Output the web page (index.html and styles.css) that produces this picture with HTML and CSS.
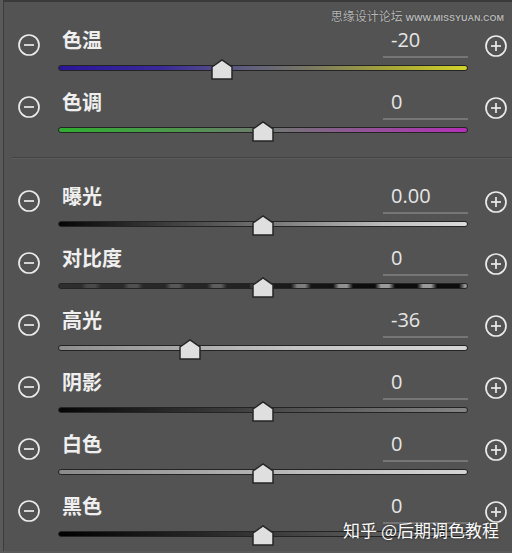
FILE: index.html
```html
<!DOCTYPE html>
<html lang="zh-CN">
  <head>
    <meta charset="UTF-8" />
    <meta name="viewport" content="width=device-width, initial-scale=1.0" />
    <title>基本调整</title>

    <link rel="stylesheet" href="styles.css">
  </head>

  <body>
    <div class="panel">
      <!-- white balance -->
      <div class="row">
        <svg class="btn minus" viewBox="0 0 22 22"><circle cx="11" cy="11" r="10" /><line x1="6" y1="11" x2="16" y2="11" /></svg>
        <div class="control">
          <div class="head">
            <span class="label">色温</span>
            <span class="value">-20</span>
          </div>
          <div class="track temp">
            <svg class="thumb" style="left: 40%" viewBox="0 0 22 21"><polygon points="1,8 11,1 21,8 21,20 1,20" /></svg>
          </div>
        </div>
        <svg class="btn plus" viewBox="0 0 22 22"><circle cx="11" cy="11" r="10" /><line x1="6" y1="11" x2="16" y2="11" /><line x1="11" y1="6" x2="11" y2="16" /></svg>
      </div>

      <div class="row">
        <svg class="btn minus" viewBox="0 0 22 22"><circle cx="11" cy="11" r="10" /><line x1="6" y1="11" x2="16" y2="11" /></svg>
        <div class="control">
          <div class="head">
            <span class="label">色调</span>
            <span class="value">0</span>
          </div>
          <div class="track tint">
            <svg class="thumb" style="left: 50%" viewBox="0 0 22 21"><polygon points="1,8 11,1 21,8 21,20 1,20" /></svg>
          </div>
        </div>
        <svg class="btn plus" viewBox="0 0 22 22"><circle cx="11" cy="11" r="10" /><line x1="6" y1="11" x2="16" y2="11" /><line x1="11" y1="6" x2="11" y2="16" /></svg>
      </div>

      <div class="divider"></div>

      <!-- tone -->
      <div class="row">
        <svg class="btn minus" viewBox="0 0 22 22"><circle cx="11" cy="11" r="10" /><line x1="6" y1="11" x2="16" y2="11" /></svg>
        <div class="control">
          <div class="head">
            <span class="label">曝光</span>
            <span class="value">0.00</span>
          </div>
          <div class="track exposure">
            <svg class="thumb" style="left: 50%" viewBox="0 0 22 21"><polygon points="1,8 11,1 21,8 21,20 1,20" /></svg>
          </div>
        </div>
        <svg class="btn plus" viewBox="0 0 22 22"><circle cx="11" cy="11" r="10" /><line x1="6" y1="11" x2="16" y2="11" /><line x1="11" y1="6" x2="11" y2="16" /></svg>
      </div>

      <div class="row">
        <svg class="btn minus" viewBox="0 0 22 22"><circle cx="11" cy="11" r="10" /><line x1="6" y1="11" x2="16" y2="11" /></svg>
        <div class="control">
          <div class="head">
            <span class="label">对比度</span>
            <span class="value">0</span>
          </div>
          <div class="track contrast">
            <svg class="thumb" style="left: 50%" viewBox="0 0 22 21"><polygon points="1,8 11,1 21,8 21,20 1,20" /></svg>
          </div>
        </div>
        <svg class="btn plus" viewBox="0 0 22 22"><circle cx="11" cy="11" r="10" /><line x1="6" y1="11" x2="16" y2="11" /><line x1="11" y1="6" x2="11" y2="16" /></svg>
      </div>

      <div class="row">
        <svg class="btn minus" viewBox="0 0 22 22"><circle cx="11" cy="11" r="10" /><line x1="6" y1="11" x2="16" y2="11" /></svg>
        <div class="control">
          <div class="head">
            <span class="label">高光</span>
            <span class="value">-36</span>
          </div>
          <div class="track highlights">
            <svg class="thumb" style="left: 32%" viewBox="0 0 22 21"><polygon points="1,8 11,1 21,8 21,20 1,20" /></svg>
          </div>
        </div>
        <svg class="btn plus" viewBox="0 0 22 22"><circle cx="11" cy="11" r="10" /><line x1="6" y1="11" x2="16" y2="11" /><line x1="11" y1="6" x2="11" y2="16" /></svg>
      </div>

      <div class="row">
        <svg class="btn minus" viewBox="0 0 22 22"><circle cx="11" cy="11" r="10" /><line x1="6" y1="11" x2="16" y2="11" /></svg>
        <div class="control">
          <div class="head">
            <span class="label">阴影</span>
            <span class="value">0</span>
          </div>
          <div class="track shadows">
            <svg class="thumb" style="left: 50%" viewBox="0 0 22 21"><polygon points="1,8 11,1 21,8 21,20 1,20" /></svg>
          </div>
        </div>
        <svg class="btn plus" viewBox="0 0 22 22"><circle cx="11" cy="11" r="10" /><line x1="6" y1="11" x2="16" y2="11" /><line x1="11" y1="6" x2="11" y2="16" /></svg>
      </div>

      <div class="row">
        <svg class="btn minus" viewBox="0 0 22 22"><circle cx="11" cy="11" r="10" /><line x1="6" y1="11" x2="16" y2="11" /></svg>
        <div class="control">
          <div class="head">
            <span class="label">白色</span>
            <span class="value">0</span>
          </div>
          <div class="track whites">
            <svg class="thumb" style="left: 50%" viewBox="0 0 22 21"><polygon points="1,8 11,1 21,8 21,20 1,20" /></svg>
          </div>
        </div>
        <svg class="btn plus" viewBox="0 0 22 22"><circle cx="11" cy="11" r="10" /><line x1="6" y1="11" x2="16" y2="11" /><line x1="11" y1="6" x2="11" y2="16" /></svg>
      </div>

      <div class="row">
        <svg class="btn minus" viewBox="0 0 22 22"><circle cx="11" cy="11" r="10" /><line x1="6" y1="11" x2="16" y2="11" /></svg>
        <div class="control">
          <div class="head">
            <span class="label">黑色</span>
            <span class="value">0</span>
          </div>
          <div class="track blacks">
            <svg class="thumb" style="left: 50%" viewBox="0 0 22 21"><polygon points="1,8 11,1 21,8 21,20 1,20" /></svg>
          </div>
        </div>
        <svg class="btn plus" viewBox="0 0 22 22"><circle cx="11" cy="11" r="10" /><line x1="6" y1="11" x2="16" y2="11" /><line x1="11" y1="6" x2="11" y2="16" /></svg>
      </div>

      <!-- watermarks -->
      <div class="mark-top">思缘设计论坛 <span class="mark-url">WWW.MISSYUAN.COM</span></div>
      <div class="mark-bottom">知乎 @后期调色教程</div>
    </div>
  </body>
</html>
```

FILE: styles.css
```css
html,
body {
  margin: 0;
  height: 553px;
  overflow: hidden;
  background-color: #5a5a5a;
}

.panel {
  position: relative;
  height: 551px;
  margin-left: 3px;
  padding-top: 22px;
  box-sizing: border-box;
  border-top: 2px solid #3a3a3a;
  border-left: 1px solid #3c3c3c;
  background-color: #535353;
  font-family: "Noto Sans CJK SC", "Noto Sans", sans-serif;
  color: #efefef;
}

.row {
  display: grid;
  grid-template-columns: 54px 410px 1fr;
  height: 62px;
}

.btn {
  width: 22px;
  height: 22px;
  fill: none;
  stroke: #ebebeb;
  stroke-width: 1.7;
}

.minus {
  margin: 10px 0 0 14px;
}

.plus {
  margin: 11px 0 0 17px;
}

.head {
  display: flex;
  justify-content: space-between;
  height: 34px;
}

.label {
  padding-left: 4px;
  font-size: 20px;
  font-weight: 700;
  line-height: 32px;
}

.value {
  width: 77px;
  padding-left: 8px;
  border-bottom: 2px solid #767676;
  font-family: "Open Sans", "Liberation Sans", sans-serif;
  font-size: 20px;
  line-height: 32px;
  color: #e6e6e6;
}

.track {
  position: relative;
  height: 4px;
  margin-top: 7px;
  border: 1px solid #242424;
  border-radius: 3px;
}

.thumb {
  position: absolute;
  top: -7px;
  width: 22px;
  height: 21px;
  margin-left: -11px;
  fill: #dfdfdf;
  stroke: #262626;
  stroke-width: 1.5;
}

.temp {
  background: linear-gradient(to right, #2a159a, #3a2a98 25%, #5e5c80 45%, #7a7a62 62%, #a8a836 82%, #d2d32a);
}

.tint {
  background: linear-gradient(to right, #2fae2f, #4f964f 30%, #6e7a6e 50%, #8c5a90 70%, #b42fb8);
}

.exposure {
  background: linear-gradient(to right, #050505, #5a5a5a 40%, #bdbdbd 80%, #dcdcdc);
}

.contrast {
  background:
    linear-gradient(to right, rgba(52, 52, 52, 0.85), rgba(52, 52, 52, 0.55) 45%, rgba(52, 52, 52, 0) 75%),
    repeating-linear-gradient(to right, #0c0c0c 0, #0c0c0c 22px, #9a9a9a 28px, #9a9a9a 36px, #0c0c0c 42px);
}

.highlights {
  background: linear-gradient(to right, #8e8e8e, #c6c6c6 60%, #d6d6d6);
}

.shadows {
  background: linear-gradient(to right, #050505, #3a3a3a 40%, #6e6e6e 80%, #858585);
}

.whites {
  background: linear-gradient(to right, #8a8a8a, #bcbcbc 60%, #d4d4d4);
}

.blacks {
  background: linear-gradient(to right, #000, #2c2c2c 40%, #5f5f5f 80%, #707070);
}

.divider {
  height: 1px;
  margin: 9px 0 22px 8px;
  background-color: #434343;
  box-shadow: 0 1px 0 #5c5c5c;
}

.mark-top {
  position: absolute;
  top: 7px;
  right: 8px;
  font-size: 12px;
  line-height: 14px;
  color: #b8b8b8;
  text-shadow: 0 0 1px #222;
}

.mark-url {
  font-family: "Liberation Sans", sans-serif;
  font-size: 9px;
  font-weight: bold;
}

.mark-bottom {
  position: absolute;
  right: 13px;
  bottom: 12px;
  font-size: 17px;
  line-height: 18px;
  color: #fafafa;
  text-shadow: 0 0 3px rgba(0, 0, 0, 0.5);
}
```
